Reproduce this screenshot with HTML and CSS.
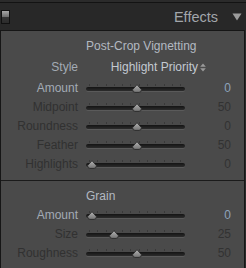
FILE: index.html
```html
<!DOCTYPE html>
<html lang="en">
<head>
    <meta charset="UTF-8">
    <meta name="viewport" content="width=device-width, initial-scale=1.0">
    <title>Effects</title>
    <link rel="stylesheet" href="styles.css">
</head>
<body>

<!-- Shared thumb shape for all sliders -->
<svg class="defs" width="0" height="0">
    <defs>
        <linearGradient id="thumb-fill" x1="0" y1="0" x2="0" y2="1">
            <stop offset="0" stop-color="#b4b4b4"/>
            <stop offset="1" stop-color="#727272"/>
        </linearGradient>
    </defs>
    <symbol id="thumb" viewBox="0 0 10 9">
        <path d="M5 0.6 L9.4 5.6 Q9.6 8.4 7 8.4 L3 8.4 Q0.4 8.4 0.6 5.6 Z" fill="url(#thumb-fill)" stroke="#262626" stroke-width="0.9"/>
    </symbol>
</svg>

<div class="top"></div>

<header class="head">
    <span class="toggle"></span>
    <span class="title">Effects</span>
    <svg class="caret" width="10" height="8" viewBox="0 0 10 8">
        <polygon points="0.5,0.5 9.5,0.5 5,7.5" fill="#9c9c9c"/>
    </svg>
</header>

<div class="panel">

    <section class="group">
        <div class="row heading"><span class="group-title">Post-Crop Vignetting</span></div>

        <div class="row select-row">
            <span class="label on">Style</span>
            <span class="select">Highlight Priority
                <svg class="updown" width="6" height="9" viewBox="0 0 6 9">
                    <polygon points="3,0.5 5.8,3.8 0.2,3.8" fill="#9a9a9a"/>
                    <polygon points="0.2,5.2 5.8,5.2 3,8.5" fill="#9a9a9a"/>
                </svg>
            </span>
        </div>

        <div class="row">
            <span class="label on">Amount</span>
            <div class="slider"><svg class="thumb" style="--p:0.5"><use href="#thumb"/></svg></div>
            <span class="value on">0</span>
        </div>
        <div class="row">
            <span class="label">Midpoint</span>
            <div class="slider"><svg class="thumb" style="--p:0.5"><use href="#thumb"/></svg></div>
            <span class="value">50</span>
        </div>
        <div class="row">
            <span class="label">Roundness</span>
            <div class="slider"><svg class="thumb" style="--p:0.5"><use href="#thumb"/></svg></div>
            <span class="value">0</span>
        </div>
        <div class="row">
            <span class="label">Feather</span>
            <div class="slider"><svg class="thumb" style="--p:0.5"><use href="#thumb"/></svg></div>
            <span class="value">50</span>
        </div>
        <div class="row">
            <span class="label">Highlights</span>
            <div class="slider"><svg class="thumb" style="--p:0"><use href="#thumb"/></svg></div>
            <span class="value">0</span>
        </div>
    </section>

    <section class="group">
        <div class="row heading"><span class="group-title">Grain</span></div>

        <div class="row">
            <span class="label on">Amount</span>
            <div class="slider"><svg class="thumb" style="--p:0"><use href="#thumb"/></svg></div>
            <span class="value on">0</span>
        </div>
        <div class="row">
            <span class="label">Size</span>
            <div class="slider"><svg class="thumb" style="--p:0.25"><use href="#thumb"/></svg></div>
            <span class="value">25</span>
        </div>
        <div class="row">
            <span class="label">Roughness</span>
            <div class="slider"><svg class="thumb" style="--p:0.5"><use href="#thumb"/></svg></div>
            <span class="value">50</span>
        </div>
    </section>

</div>

</body>
</html>
```

FILE: styles.css
```css
body {
    margin: 0;
    width: 246px;
    height: 268px;
    overflow: hidden;
    background: #2b2b2b;
    font-family: "Liberation Sans", Arial, sans-serif;
    font-size: 12px;
}
.defs {
    display: block;
}

/* Panel header */
.top {
    height: 2px;
    border-bottom: 1px solid #131313;
}
.head {
    height: 27px;
    background: #282828;
    display: flex;
    align-items: center;
    padding: 0 4px 0 1px;
}
.toggle {
    width: 7px;
    height: 12px;
    border: 1px solid #111;
    background: linear-gradient(#a6a6a6, #6c6c6c 50%, #353535 50%, #2c2c2c);
    margin-top: 1px;
}
.title {
    margin-left: auto;
    margin-right: 14px;
    font-size: 14.5px;
    color: #a2a6ab;
}
.caret {
    display: block;
    margin-top: 1px;
}

/* Panel body */
.panel {
    width: 243px;
    border: 1px solid #161616;
    border-bottom: none;
    background: #4a4a4a;
}
.group {
    padding: 6px 0;
}
.group + .group {
    border-top: 1px solid #1b1b1b;
}
.row {
    display: grid;
    grid-template-columns: 77px 99px 1fr;
    column-gap: 8px;
    height: 19px;
    line-height: 19px;
    padding-right: 13px;
}
.heading .group-title {
    grid-column: 2 / 4;
    color: #b3b9c1;
}
.select-row {
    margin: 2px 0;
}
.select {
    grid-column: 2 / 4;
    text-align: center;
    color: #c3c9d1;
}
.updown {
    vertical-align: -1px;
    margin-left: -1px;
}
.label {
    text-align: right;
    color: #313131;
}
.label.on {
    color: #a3abb5;
}
.value {
    text-align: right;
    color: #323232;
}
.value.on {
    color: #8ea3bb;
}

/* Sliders */
.slider {
    position: relative;
}
.slider::before {
    content: "";
    position: absolute;
    top: 5px;
    left: 3px;
    width: 92px;
    height: 2px;
    background: repeating-linear-gradient(to right, #393939 0 1px, transparent 1px 8.3px);
}
.slider::after {
    content: "";
    position: absolute;
    top: 8px;
    left: 0;
    right: 0;
    height: 4px;
    border-radius: 2px;
    background: linear-gradient(#141414, #2c2c2c);
    box-shadow: 0 1px 0 #5a5a5a;
}
.thumb {
    position: absolute;
    z-index: 1;
    top: 5px;
    left: calc(0.5px + var(--p) * 91px);
    width: 10px;
    height: 9px;
}
```
